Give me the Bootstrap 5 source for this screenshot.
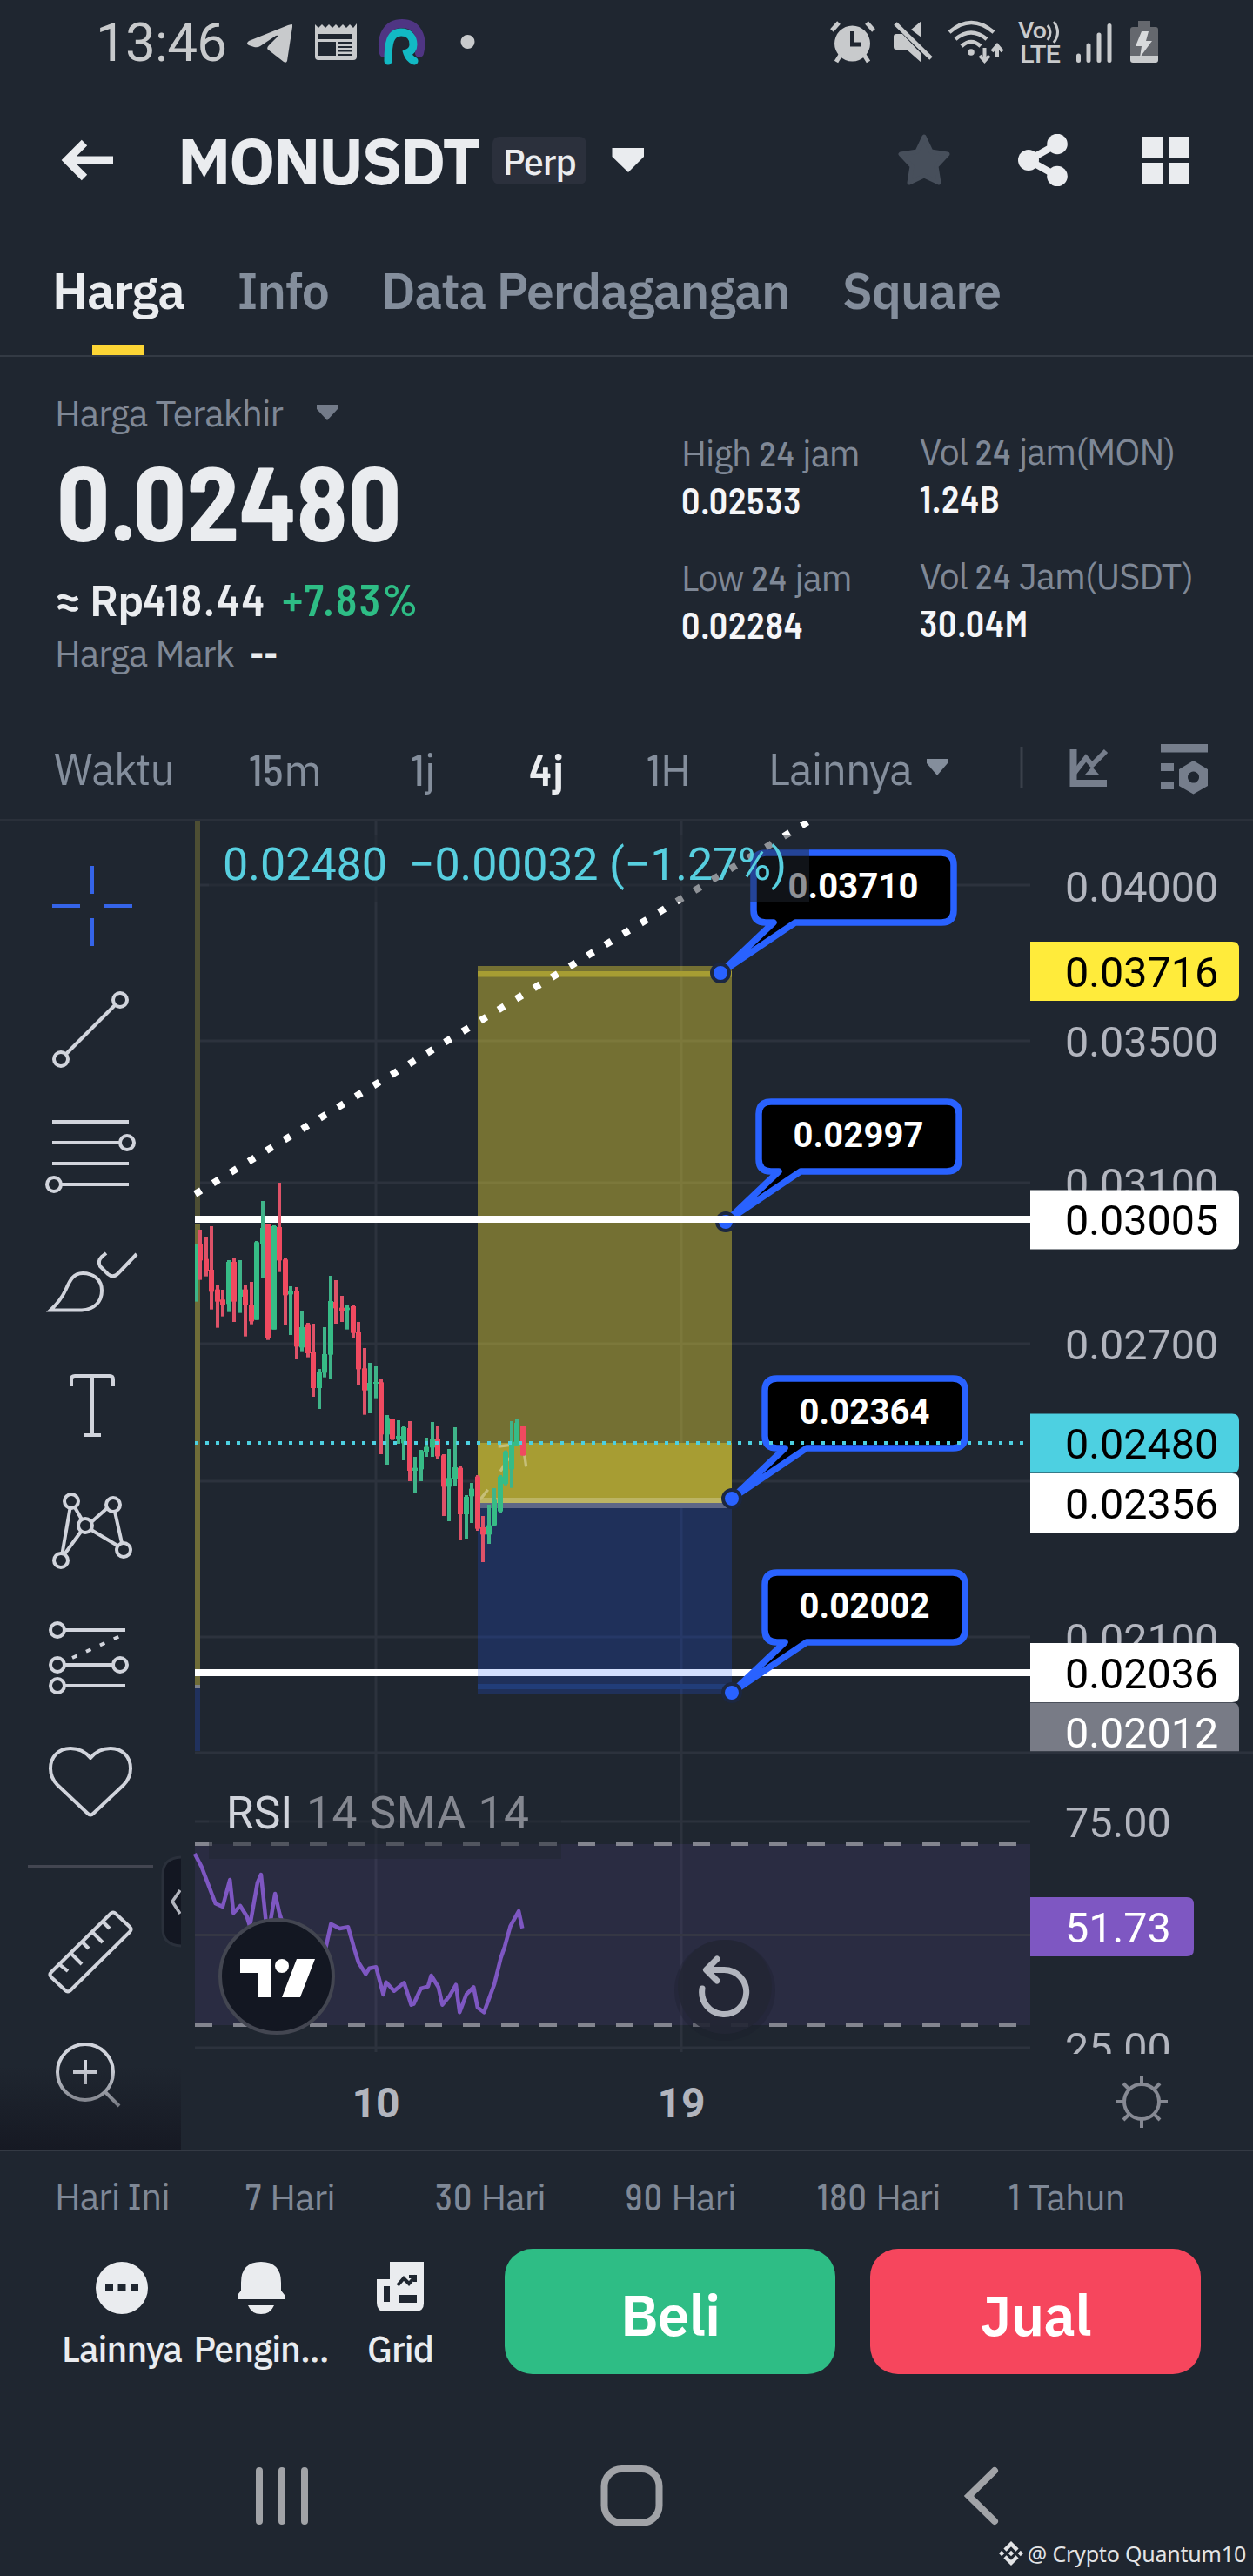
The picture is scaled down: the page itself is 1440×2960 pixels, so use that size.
<!DOCTYPE html>
<html lang="id">
<head>
<meta charset="utf-8">
<meta name="viewport" content="width=device-width, initial-scale=1">
<title>MONUSDT Perp</title>
<link href="https://cdn.jsdelivr.net/npm/bootstrap@5.3.0/dist/css/bootstrap.min.css" rel="stylesheet">
<style>
:root{--ink:#eaecef;--muted:#848e9c;--line:#333a44;--bg:#1f2630;--up:#2ebd85;--down:#f6465d}
html,body{background:var(--bg)}
body{margin:0;color:var(--ink);font-family:"IBM Plex Sans",Roboto,"Noto Sans",sans-serif;font-weight:450;letter-spacing:-.022em;font-size:42px;line-height:50px}
.phone{width:1440px;height:2960px;overflow:hidden;background:var(--bg)}
svg{display:block;flex:none}
.num{font-family:"Barlow Semi Condensed",Roboto,sans-serif;letter-spacing:.012em}
.dim{color:#7f8896}
.statusbar{height:98px;color:#c8cacc;padding-left:110px;padding-right:109px}
.clock{font:400 62px/54px Roboto,sans-serif;letter-spacing:-.8px;width:174px}
.topbar{height:172px;padding-left:70px;padding-right:73px}
.pair{font-size:75px;font-weight:700;line-height:80px;letter-spacing:-2.4px;margin-left:74px;width:362px}
.perp{height:55px;width:108px;background:#2b303c;border-radius:8px;font-size:41px;font-weight:500;line-height:58px;text-align:center}
.tabs{height:140px;gap:60.5px;padding-left:60px;border-bottom:2px solid var(--line);font-size:57px;font-weight:600}
.tabs .tab-link{color:var(--muted);text-decoration:none;line-height:129px;height:138px;letter-spacing:-.018em}
.tabs .tab-link.on{color:var(--ink)}
.tabs .tab-link.on::after{content:"";display:block;width:60px;height:12px;background:#fcd535;margin:-3px auto 0}
.quote{height:420px;padding:40px 0 0 63px}
.last{width:720px}
.bigprice{font-size:120px;line-height:120px;font-weight:700;margin:14px 0 0 2px;letter-spacing:.004em}
.conv{font-size:50px;line-height:60px;font-weight:600;margin-top:24px}
.conv .num{font-size:51px;letter-spacing:.042em}
.stat-a{width:274px;padding-top:45px;font-size:41px}
.stat-b{padding-top:43px;font-size:41px}
.stat-v{font-weight:600;font-size:42px;margin:3px 0 39px;color:#f5f6f8;letter-spacing:.02em}
.frames{height:113px;padding:0 0 3px 62px;border-bottom:2px solid #2a303a;font-size:50px;color:var(--muted)}
.frames span{line-height:60px}
.chart{height:1529px;border-bottom:2px solid #343a44;position:relative}
.tools{width:208px}
.tools svg{fill:none;stroke:#d1d4dc;stroke-width:4}
.toolfade{position:absolute;left:0;bottom:0;width:208px;height:96px;background:linear-gradient(rgba(22,25,35,0),#161923)}
.drawer{position:absolute;left:184px;top:1189px}
.plot text{font-family:Roboto,sans-serif;letter-spacing:0}
.ranges{height:102px;padding:1px 0 0 63px;color:#7f8896}
.ranges .num{letter-spacing:.03em}
.actions{height:166px;padding-left:60px}
.act{width:160px;padding-top:25px;font-size:41px;font-weight:500}
.act span{margin-top:15px;white-space:nowrap}
.trade{width:380px;height:144px;border-radius:32px;border:0;color:#fff;font-size:66px;font-weight:600;padding:6px 0 0;line-height:1;margin-top:10px;letter-spacing:-.015em}
.trade.buy{background:var(--up);margin-left:40px}
.trade.sell{background:var(--down);margin-left:40px}
.sysnav{height:220px;padding-top:93px}
.sysnav .keys svg{fill:none;stroke:#a1a3a7;stroke-width:8}
.mark-row{margin-top:11px;height:40px;padding-right:8px;color:#e3e4e6;font:400 25px/40px "Noto Sans",sans-serif;letter-spacing:-.2px}
</style>
</head>
<body>
<main class="phone d-flex flex-column">

<header class="statusbar d-flex align-items-center">
  <div class="clock">13:46</div>
  <svg width="52" height="54" viewBox="284 22 52 54"><path fill="#c8cacc" d="M335 28Q337 28 336 31L330 70Q329 73 326 71L308 57Q306 55 309 52L319 42Q320 40 317 41L299 53Q296 55 292 54L286 52Q282 50 286 47L331 29Z"/></svg>
  <svg style="margin-left:26px" width="48" height="54" viewBox="362 22 48 54"><path fill="#c8cacc" fill-rule="evenodd" d="M362 28l4 4 4-4 4 4 4-4 4 4 4-4 4 4 4-4 4 4 4-4 4 4 4-5V65Q410 69 406 69H366Q362 69 362 65ZM366 39V45H405V39ZM366 48V64H386V48ZM388 48V50.500H405V48ZM388 53V55H405V53ZM388 57.500V59.500H405V57.500ZM388 62V64H405V62Z"/></svg>
  <svg class="ms-4" width="56" height="54" viewBox="434 22 56 54" fill="none" stroke-linecap="round"><path d="M441 61C437 42 445 27 462 27S487 42 482 61" stroke="#4f3583" stroke-width="10"/><path d="M446 70C446 50 448 37 461 37C471 37 475 44 475 51Q475 58 468 61Q470 67 476 70" stroke="#12b9c4" stroke-width="9"/></svg>
  <svg style="margin-left:38px" width="18" height="54" viewBox="528 22 18 54"><circle cx="537.500" cy="48" r="8" fill="#c8cacc"/></svg>
  <div class="ms-auto d-flex">
  <svg width="52" height="54" viewBox="954 22 52 54"><g fill="none" stroke="#c8cacc" stroke-width="5"><path d="M956 35l8-9M996 26l8 9M966 63l-5 8M993 63l5 8"/></g><circle cx="979.500" cy="50" r="20.500" fill="#c8cacc"/><path d="M979.500 36V51H990" fill="none" stroke="#1f2630" stroke-width="5"/></svg>
  <svg style="margin-left:20px" width="46" height="54" viewBox="1026 22 46 54"><path fill="#c8cacc" d="M1030 39H1037L1059 62V72L1042 57H1030Q1027 57 1027 54V42Q1027 39 1030 39ZM1059 24V43L1047 34Z"/><path d="M1029 27L1070 67" stroke="#c8cacc" stroke-width="5"/></svg>
  <svg style="margin-left:16px" width="66" height="54" viewBox="1088 22 66 54"><g fill="none" stroke="#c8cacc" stroke-width="4.500"><path d="M1091 37Q1116 15 1142 37M1098 45Q1116 30 1134 45M1105 53Q1116 43 1127 53"/><path d="M1131.500 55V69M1126 64l5.500 6 5.500-6M1146 66V53M1140 59l6-7 6 7" stroke-width="4"/></g><circle cx="1116" cy="60" r="3.800" fill="#c8cacc"/></svg>
  <svg class="overflow-visible" style="margin-left:15px" width="52" height="54" viewBox="1169 22 52 54"><g fill="#c8cacc" font-family="Roboto,sans-serif" font-weight="500"><text x="1170" y="44" font-size="26" textLength="32" lengthAdjust="spacingAndGlyphs">Vo</text><text x="1172" y="71.500" font-size="27" textLength="46" lengthAdjust="spacingAndGlyphs">LTE</text></g><g fill="none" stroke="#c8cacc" stroke-width="3"><path d="M1204 29Q1210 37 1204 46M1211 25Q1220 37 1211 49"/></g></svg>
  <svg style="margin-left:15px" width="44" height="54" viewBox="1236 22 44 54"><path d="M1239.500 64V69.500M1251 52V69.500M1263 40V69.500M1275 29.500V69.500" stroke="#c8cacc" stroke-width="5" stroke-linecap="round"/></svg>
  <svg style="margin-left:18px" width="33" height="54" viewBox="1298 22 33 54"><path fill="#65686e" d="M1308 24H1322V31H1328Q1331 31 1331 34V64H1299V34Q1299 31 1302 31H1308Z"/><path fill="#c8cacc" d="M1299 64H1331V69Q1331 72 1328 72H1302Q1299 72 1299 69Z"/><path fill="#d8dadc" d="M1312 36H1320L1317 47H1324L1310 66L1312 53H1305Z"/></svg>
  </div>
</header>

<nav class="topbar d-flex align-items-center">
  <svg width="60" height="60" viewBox="70 154 60 60" fill="none" stroke="#eaecef" stroke-width="9"><path d="M130 184H77M97 164L77 184L97 204"/></svg>
  <div class="pair">MONUSDT</div>
  <div class="perp">Perp</div>
  <svg style="margin-left:29px" width="37" height="60" viewBox="702 154 37 60"><path fill="#eaecef" d="M702.500 170H739V180L721 198L702.500 180Z"/></svg>
  <svg class="ms-auto" width="60" height="60" viewBox="1032 154 60 60"><path fill="#474f5b" stroke="#474f5b" stroke-width="5" stroke-linejoin="round" d="M1062 157L1070 174L1089 177L1076 191L1079 210L1062 202L1045 210L1048 191L1035 177L1054 174Z"/></svg>
  <svg style="margin-left:78px" width="58" height="60" viewBox="1170 154 58 60" fill="#eaecef"><circle cx="1182" cy="184" r="12"/><circle cx="1215" cy="165.500" r="11.800"/><circle cx="1215" cy="202.500" r="11.800"/><path d="M1215 165.500L1182 184L1215 202.500" fill="none" stroke="#eaecef" stroke-width="8"/></svg>
  <svg style="margin-left:85px" width="54" height="60" viewBox="1313 154 54 60" fill="#eaecef"><path d="M1313 157h24v24h-24zM1343 157h24v24h-24zM1313 187h24v24h-24zM1343 187h24v24h-24z"/></svg>
</nav>

<nav class="tabs d-flex">
  <a class="tab-link on" href="#">Harga</a><a class="tab-link" href="#">Info</a><a class="tab-link" href="#">Data Perdagangan</a><a class="tab-link" href="#">Square</a>
</nav>

<section class="quote d-flex">
  <div class="last">
    <div class="dim d-flex">Harga Terakhir
      <svg style="margin-left:38px" width="26" height="50" viewBox="368 450 26 50"><path fill="#737b89" d="M369 465H393V470L381 483L369 470Z"/></svg>
    </div>
    <div class="bigprice num">0.02480</div>
    <div class="conv d-flex"><span>≈&nbsp;Rp<span class="num">418.44</span></span><span class="num" style="color:#2ebd85;margin-left:18px">+7.83%</span></div>
    <div class="dim mt-1" style="padding-top:2px">Harga Mark <span style="color:#eaecef;font-weight:600;margin-left:9px">--</span></div>
  </div>
  <div class="stat-a">
    <div class="dim">High <span class="num">24</span> jam</div><div class="stat-v num">0.02533</div>
    <div class="dim">Low <span class="num">24</span> jam</div><div class="stat-v num">0.02284</div>
  </div>
  <div class="stat-b">
    <div class="dim">Vol <span class="num">24</span> jam(MON)</div><div class="stat-v num">1.24B</div>
    <div class="dim">Vol <span class="num">24</span> Jam(USDT)</div><div class="stat-v num">30.04M</div>
  </div>
</section>

<nav class="frames d-flex align-items-center">
  <span style="width:224px">Waktu</span>
  <span style="width:186px"><span class="num">15</span>m</span>
  <span style="width:136px"><span class="num">1</span>j</span>
  <span style="width:135px;color:#eaecef;font-weight:600"><span class="num">4</span>j</span>
  <span style="width:140px"><span class="num">1</span>H</span>
  <span style="width:181px">Lainnya</span>
  <svg width="26" height="60" viewBox="1064 855 26 60"><path fill="#848e9c" d="M1065 873H1089V878L1077 892L1065 878Z"/></svg>
  <svg style="margin-left:80px" width="8" height="60" viewBox="1170 855 8 60"><path d="M1174 859V907" stroke="#3a404a" stroke-width="3"/></svg>
  <svg style="margin-left:50px" width="46" height="60" viewBox="1228 855 46 60"><g fill="none" stroke="#767e8c" stroke-width="6"><path d="M1233.500 862V901H1272" stroke-width="8"/><path d="M1234 890L1248 872L1255 880L1271 864"/></g><path fill="#767e8c" d="M1255 882L1263 891H1247Z"/></svg>
  <svg style="margin-left:58px" width="58" height="60" viewBox="1332 855 58 60" fill="#767e8c"><path d="M1334 856h54v9.500h-54zM1334 878h15v9h-15zM1334 899h15v9h-15z"/><path fill-rule="evenodd" d="M1371.500 875L1388 885V904L1371.500 913.500L1355 904V885ZM1371.500 887.500a6.500 6.500 0 1 0 .1 0Z"/></svg>
</nav>

<section class="chart d-flex">
  <div class="tools d-flex flex-column">
    <svg width="208" height="169" viewBox="0 943 208 169"><path stroke="#3564e8" d="M60 1041H92M120 1041H152M106 995V1027M106 1055V1087"/></svg>
    <svg width="208" height="142" viewBox="0 1112 208 142"><circle cx="70" cy="1217" r="8"/><circle cx="138" cy="1149" r="8"/><path d="M76 1211L132 1155"/></svg>
    <svg width="208" height="142" viewBox="0 1254 208 142"><path d="M60 1289H148M60 1313H138M60 1337H148M70 1361H148"/><circle cx="146" cy="1313" r="8"/><circle cx="62" cy="1361" r="8"/></svg>
    <svg width="208" height="144" viewBox="0 1396 208 144"><path d="M58 1505.500H94C108 1505 117 1496 117 1483C117 1470 107 1463 95 1463C84 1463 80 1472 76 1481C72 1490 66 1498 58 1505.500ZM122 1440L117 1444Q112 1449 115 1455L124 1464Q130 1469 136 1463L157 1441"/></svg>
    <svg width="208" height="145" viewBox="0 1540 208 145"><path d="M82 1593V1585Q82 1581 86 1581H126Q130 1581 130 1585V1593M106 1581V1649M96 1649H116"/></svg>
    <svg width="208" height="145" viewBox="0 1685 208 145"><circle cx="82" cy="1725" r="8"/><circle cx="130" cy="1729" r="8"/><circle cx="98" cy="1753" r="8"/><circle cx="70" cy="1793" r="8"/><circle cx="142" cy="1781" r="8"/><path d="M80.500 1733L71.500 1785M86 1732L94 1746M93 1760L74 1786M105 1749L123 1733M105 1758L135 1776M132 1737L140 1773"/></svg>
    <svg width="208" height="146" viewBox="0 1830 208 146"><circle cx="66" cy="1873" r="8"/><circle cx="66" cy="1913" r="8"/><circle cx="66" cy="1937" r="8"/><circle cx="138" cy="1913" r="8"/><path d="M74 1873H144M74 1913H130M74 1937H144"/><path d="M83 1905L138 1880" stroke-dasharray="6 11.500"/></svg>
    <svg width="208" height="144" viewBox="0 1976 208 144"><path stroke-linejoin="round" d="M104 2020C99 2014 91 2009 81 2009C67 2009 58 2019 58 2032C58 2040 61 2046 66 2051L101 2084Q104 2087 107 2084L142 2051C147 2046 150 2040 150 2032C150 2019 141 2009 127 2009C117 2009 109 2014 104 2020Z"/></svg>
    <svg width="208" height="50" viewBox="0 2120 208 50"><path stroke="#434651" d="M32 2145H176"/></svg>
    <svg width="208" height="146" viewBox="0 2170 208 146"><path stroke-linejoin="round" d="M127 2199Q130 2196 133 2199L149 2214Q152 2217 149 2220L81 2287Q78 2290 75 2287L59 2272Q56 2269 59 2266ZM68 2257L78 2265M81 2244L94 2257M94 2231L102 2239M106 2220L118 2232M118 2208L126 2216"/></svg>
    <svg width="208" height="155" viewBox="0 2316 208 155"><circle cx="98" cy="2381" r="32"/><path d="M84 2381H112M98 2367V2395M121 2404L137 2420"/></svg>
  </div>
  <div class="toolfade"></div>
  <svg class="drawer" width="24" height="106" viewBox="184 2132 24 106"><path fill="#131722" stroke="#2a303b" stroke-width="3" d="M210 2134Q187 2134 187 2154V2216Q187 2236 210 2236Z"/><path d="M207 2172L198 2185L207 2199" fill="none" stroke="#b2b5be" stroke-width="3.500"/></svg>

  <svg class="plot" width="1232" height="1528" viewBox="208 943 1232 1528">
    <g stroke="#2c323d" stroke-width="3">
      <path d="M224 1017H1184M224 1196H1184M224 1359H1184M224 1544H1184M224 1702H1184M224 1881H1184M224 2093H1184M224 2353H1184M432 943V2358M783 943V2358"/>
      <path d="M224 2014H1440"/>
    </g>
    <path fill="#4d4e33" d="M224 943h6v459h-6z"/><path fill="#6f6c38" d="M224 1406h6v530h-6z"/>
    <path fill="#7d818c" d="M224 1936h6v4h-6z"/><path fill="#20315d" d="M224 1940h6v72h-6z"/>
    <path fill="#ffeb3b" fill-opacity=".38" d="M549 1110H841V1658H549Z"/>
    <path fill="#a79d33" d="M549 1116h292v6.500h-292z"/>
    <path fill="#a79d33" d="M549 1658h292v63h-292z"/>
    <path fill="#bcb463" d="M549 1721h292v6h-292z"/>
    <path fill="#5e6786" d="M549 1727h292v6h-292z"/>
    <path fill="#1f305a" d="M549 1733h292v214h-292z"/>
    <path stroke="#263867" stroke-width="3" d="M549 1881H841M783 1733V1947"/>
    <path fill="#fff" d="M224 1397h960v8h-960zM224 1918h960v8h-960z"/>
    <path fill="#d3dffd" d="M549 1918h292v8h-292z"/>
    <path fill="#213d79" d="M549 1935h292v6h-292z"/>
    <path d="M224.300 1372L928 944.500" stroke="#fff" stroke-width="8" stroke-dasharray="8 15.980"/>
    <g id="candles"></g>
    <g id="callouts"></g>
    <path fill="#fff" d="M820 1397h30v8h-30z"/>
    <path d="M224 1658H1184" stroke="#4dd0e1" stroke-width="4" stroke-dasharray="4 8"/>
    <path fill="#1f2630" fill-opacity=".5" d="M240 960H930V1036H240Z"/>
    <g font-size="52" fill="#57cfdf"><text x="256" y="1010.500">0.02480</text><text x="470" y="1010.500" textLength="434">−0.00032 (−1.27%)</text></g>

    <!-- RSI pane -->
    <path fill="#7e57c2" fill-opacity=".12" d="M224 2119H1184V2327H224Z"/>
    <path d="M224 2223.500H1184" stroke="#353744" stroke-width="3"/>
    <path d="M224 2119H1184M224 2327H1184" stroke="#83858f" stroke-width="4" stroke-dasharray="20 24"/>
    <path fill="#1f2630" fill-opacity=".5" d="M240 2060H645V2136H240Z"/>
    <path id="rsi" fill="none" stroke="#7e57c2" stroke-width="4.500" stroke-linejoin="round"/>
    <text x="260" y="2101" font-size="51.500" fill="#d1d4dc">RSI</text>
    <text x="352" y="2101" font-size="51.500" fill="#848790" textLength="256">14 SMA 14</text>
    <circle cx="318" cy="2271" r="65" fill="#131722" stroke="#434651" stroke-width="4"/>
    <path fill="#fff" d="M276 2251H312V2295H296V2267H276ZM341 2251H362L345 2295H324Z"/><circle cx="324" cy="2259" r="8" fill="#fff"/>
    <circle cx="833" cy="2287" r="58" fill="#1c1f2b" opacity=".3"/>
    <circle cx="833" cy="2283" r="54" fill="#242735" fill-opacity=".9"/>
    <path d="M807 2285A25.500 25.500 0 1 0 832 2263.500H813M824 2251L811.500 2263.500L824 2276" fill="none" stroke="#b2b5be" stroke-width="7" stroke-linecap="round" stroke-linejoin="round"/>
    <g font-size="48" font-weight="700" fill="#b2b5be" text-anchor="middle"><text x="432" y="2433">10</text><text x="783" y="2433">19</text></g>

    <!-- price scale -->
    <g font-size="48.500" fill="#b2b5be">
      <g id="scale"></g>
      <svg x="1184" y="2320" width="256" height="40" viewBox="1184 2320 256 40"><text x="1224" y="2370">25.00</text></svg>
    </g>
    <g fill="none" stroke="#868993" stroke-width="4"><circle cx="1312" cy="2415" r="20"/><path d="M1312 2395V2385M1312 2435V2445M1292 2415H1282M1332 2415H1342M1298 2401L1291 2394M1326 2401L1333 2394M1298 2429L1291 2436M1326 2429L1333 2436"/></g>
  </svg>
</section>

<nav class="ranges d-flex align-items-center">
  <span style="width:219px">Hari Ini</span><span style="width:218px"><span class="num">7</span> Hari</span><span style="width:219px"><span class="num">30</span> Hari</span><span style="width:220px"><span class="num">90</span> Hari</span><span style="width:220px"><span class="num">180</span> Hari</span><span><span class="num">1</span> Tahun</span>
</nav>

<section class="actions d-flex">
  <div class="act d-flex flex-column align-items-center"><svg width="60" height="60" viewBox="0 0 60 60"><circle cx="30" cy="30" r="30" fill="#eaecef"/><path fill="#1f2630" d="M11 25h9v9h-9zM25.500 25h9v9h-9zM40 25h9v9h-9z"/></svg><span>Lainnya</span></div>
  <div class="act d-flex flex-column align-items-center"><svg width="60" height="60" viewBox="0 0 60 60" fill="#eaecef"><path d="M7 24Q7 0 30 0T53 24V33L57 38V43H3V38L7 33ZM15 50H45Q41 60 30 60T15 50Z"/></svg><span>Pengin...</span></div>
  <div class="act d-flex flex-column align-items-center"><svg width="60" height="60" viewBox="0 0 60 60"><path fill="#eaecef" fill-rule="evenodd" d="M18 0H57V48Q57 57 47 57H12Q3 57 3 47V20H18ZM11 28V46H18V28ZM28 38V47H49V38Z"/><path d="M27 27L34 19L40 25L48 16M40 17H47V23" fill="none" stroke="#1f2630" stroke-width="4"/></svg><span>Grid</span></div>
  <button class="trade buy">Beli</button>
  <button class="trade sell">Jual</button>
</section>

<footer class="sysnav">
  <div class="keys d-flex" style="padding-left:290px">
    <svg width="68" height="70" viewBox="290 2833 68 70" stroke-linecap="round"><path d="M298 2839V2897M324 2839V2897M350 2839V2897"/></svg>
    <svg style="margin-left:332px" width="72" height="70" viewBox="690 2833 72 70"><rect x="694.500" y="2837" width="63" height="62" rx="20"/></svg>
    <svg style="margin-left:344px" width="44" height="70" viewBox="1106 2833 44 70" stroke-linecap="round"><path d="M1143 2839L1113.500 2868L1143 2897"/></svg>
  </div>
  <div class="mark-row d-flex align-items-center justify-content-end">
    <svg style="margin-right:5px" width="28" height="28" viewBox="0 0 126.600 126.600" fill="#e3e4e6"><path d="M38.700 53.200L63.300 28.600L87.900 53.200L102.200 38.900L63.300 0L24.400 38.900ZM0 63.300L14.300 49L28.600 63.300L14.300 77.600ZM38.700 73.400L63.300 98L87.900 73.400L102.200 87.700L63.300 126.600L24.400 87.700ZM98 63.300L112.300 49L126.600 63.300L112.300 77.600ZM77.800 63.300L63.300 48.800L48.800 63.300L63.300 77.800Z"/></svg>
    <span>@ Crypto Quantum10</span>
  </div>
</footer>
</main>

<script src="https://cdn.jsdelivr.net/npm/bootstrap@5.3.0/dist/js/bootstrap.bundle.min.js"></script>
<script>
// [x, high, low, bodyTop, bodyBottom, rising]; units are a third of a pixel from the plot's inner corner
const bars = [[15,267,467,267,430,1],[30,219,392,267,325,0],[51,243,380,320,360,0],[69,207,494,357,433,0],[90,411,557,425,467,0],[108,426,518,460,480,0],[129,324,503,330,475,1],[147,315,537,330,467,0],[168,324,506,425,450,1],[186,408,587,425,478,0],[207,399,545,478,535,0],[225,258,530,262,530,1],[246,120,387,213,267,1],[264,198,599,200,592,0],[285,204,563,207,563,1],[303,57,365,210,325,0],[324,318,549,322,445,0],[342,414,582,432,442,1],[363,417,666,432,622,0],[381,498,638,555,625,1],[402,540,659,545,645,0],[420,543,795,640,765,0],[441,699,837,708,765,1],[459,555,728,648,712,1],[480,378,732,465,650,1],[498,393,543,468,490,0],[519,447,537,488,498,0],[537,477,563,488,496,1],[558,480,594,483,575,0],[576,537,755,570,700,0],[597,627,857,697,773,0],[615,678,852,747,773,1],[636,690,800,744,750,1],[654,735,993,745,925,0],[675,858,1029,868,925,1],[693,870,944,872,940,0],[714,876,957,930,942,1],[732,897,1014,900,955,1],[753,879,1086,903,1050,0],[771,1002,1125,1040,1050,1],[792,978,1086,982,1045,1],[810,936,1002,968,985,1],[831,882,1002,940,970,1],[849,897,1011,940,1000,0],[870,993,1206,997,1105,0],[888,975,1224,1075,1105,1],[909,900,1101,1038,1078,1],[927,1035,1290,1040,1200,0],[948,1134,1284,1140,1200,1],[966,1092,1230,1112,1138,1],[987,1065,1257,1070,1250,0],[1005,1206,1365,1245,1270,0],[1026,1167,1302,1238,1270,1],[1044,1110,1239,1150,1238,1],[1065,1065,1194,1070,1190,1],[1083,980,1100,985,1095,1],[1104,879,1109,950,1045,1],[1122,870,963,885,963,1],[1143,894,998,897,997,0]];
let s = '<svg x="224" y="943" width="960" height="1069" viewBox="224 943 960 1069"><g transform="translate(220 1340) scale(.33333)">';
s += '<path d="M995 1150L1022 1115M1065 1052L1095 1005M1058 966L1095 962M1146 980L1154 1036" stroke="#c6bf78" stroke-width="10" fill="none"/>';
for (const [x, h, l, a, b, up] of bars)
  s += `<path fill="${up ? '#3fb489' : '#de5268'}" d="M${x-6} ${h}h12V${l}h-12z"/><path fill="${up ? '#36bc86' : '#f04a60'}" d="M${x-9} ${a}h18V${b}h-18z"/>`;
candles.innerHTML = s + '</g></svg>';

// price notes: anchor point and label
callouts.innerHTML = [[828,1118,'0.03710'],[834,1404,'0.02997'],[841,1722,'0.02364'],[841,1945,'0.02002']].map(([x, y, t]) =>
  `<path transform="translate(${x} ${y})" fill="#000" stroke="#2962ff" stroke-width="7.500" stroke-linejoin="round" d="M0 0L61 -58H52Q38 -58 38 -72V-124Q38 -138 52 -138H254Q268 -138 268 -124V-72Q268 -58 254 -58H86Z"/>
   <circle cx="${x}" cy="${y}" r="10" fill="#2962ff" stroke="#1c2740" stroke-width="4"/>
   <text x="${x+152.500}" y="${y-86}" text-anchor="middle" font-size="40" font-weight="700" fill="#fff" textLength="150">${t}</text>`).join('');

// price scale: [centre y, text, tag colour, text colour, tag width]
scale.innerHTML = [[1018,'0.04000'],[1196,'0.03500'],[1359,'0.03100'],[1544,'0.02700'],[1882,'0.02100'],[2093.5,'75.00'],
  [1116,'0.03716','#ffeb3b','#000',240],[1401.5,'0.03005','#fff','#000',240],[1658.5,'0.02480','#4dd0e1','#000',240],[1727,'0.02356','#fff','#000',240],
  [1990.5,'0.02012','#787b86','#fff',240],[1922,'0.02036','#fff','#000',240],[2214,'51.73','#7e57c2','#fff',188]].map(([y, t, bg, fg, w]) =>
  (bg ? `<path fill="${bg}" d="M1184 ${y-34}h${w-8}q8 0 8 8v52q0 8 -8 8h-${w-8}z"/>` : '') +
  `<text x="1224" y="${y+17.500}"${fg ? ` fill="${fg}"` : ''}>${t}</text>`).join('') + '<path fill="#1f2630" d="M1184 2012.500h256v13h-256z"/><path d="M1184 2014H1440" stroke="#2c323d" stroke-width="3"/>';

const r = '30,360 47,405 82,532 100,543 118,450 127,565 144,540 160,575 168,610 187,460 196,432 208,590 214,610 220,590 231,498 242,565 250,600 358,685 371,602 393,618 414,613 430,690 440,735 458,775 467,755 484,751 502,846 509,803 529,833 554,805 572,881 578,878 596,825 614,818 622,780 640,820 650,881 668,850 684,812 693,907 710,845 728,820 738,890 754,907 780,810 796,720 806,680 820,610 841,558 850,617';
rsi.setAttribute('d', 'M' + r.split(' ').map(p => { const [x, y] = p.split(','); return (210 + x / 2.178).toFixed(1) + ' ' + (2010 + y / 3).toFixed(1); }).join('L'));
</script>
</body>
</html>
